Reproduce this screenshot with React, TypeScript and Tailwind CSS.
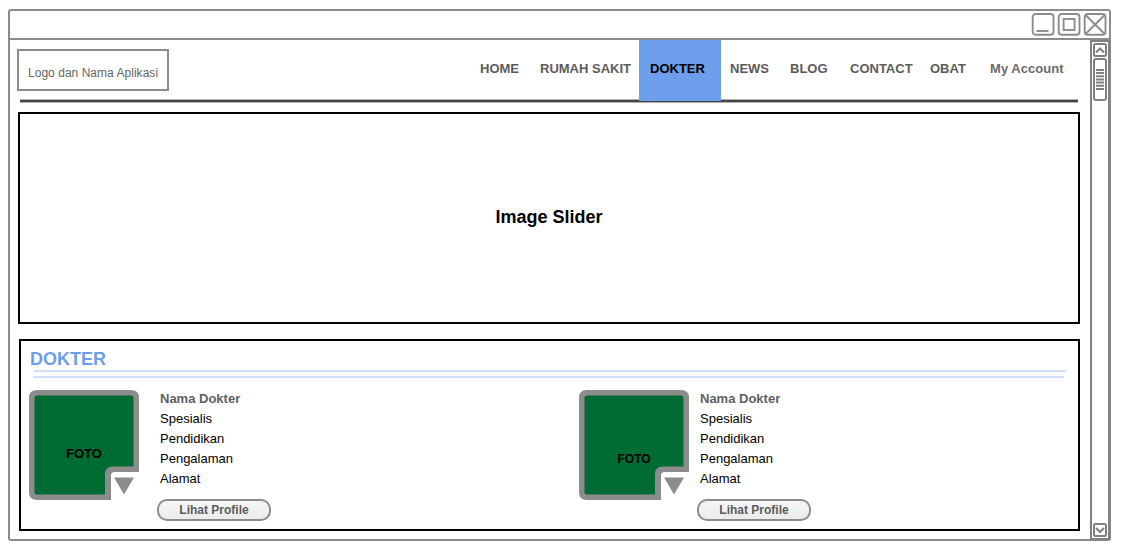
const navItems = [
  { label: "HOME", box: "w-[60px]" },
  { label: "RUMAH SAKIT", box: "w-[99px]" },
  { label: "DOKTER", box: "w-[82px] pl-[11px] bg-[#6d9eeb] text-black" },
  { label: "NEWS", box: "w-[69px] pl-[9px]" },
  { label: "BLOG", box: "w-[60px]" },
  { label: "CONTACT", box: "w-[80px]" },
  { label: "OBAT", box: "w-[60px]" },
  { label: "My Account", box: "w-[90px] tracking-[0.05px] text-[#6b6b6b]" },
];

function WindowButtons() {
  return (
    <svg width="76" height="24" viewBox="0 0 76 24" fill="none" stroke="#8c8c8c" strokeWidth="1.9" className="shrink-0">
      <rect x="1.7" y="2" width="20.8" height="20.8" rx="3" />
      <path d="M5.5 19H17.5" />
      <rect x="27.7" y="2" width="20.8" height="20.8" rx="3" />
      <rect x="32.6" y="7" width="11" height="11" />
      <rect x="53.7" y="2" width="20.8" height="20.8" rx="3" />
      <path d="M54.5 3L73.7 22M73.7 3L54.5 22" />
    </svg>
  );
}

function ArrowButton({ down = false }: { down?: boolean }) {
  return (
    <svg width="14" height="14" viewBox="0 0 14 14" fill="none" stroke="#808080" strokeWidth="2" className="shrink-0">
      <rect x="1" y="1" width="12" height="12" rx="1.5" />
      <path d={down ? "M3 5L7 9L11 5" : "M3 9.5L7 5.5L11 9.5"} />
    </svg>
  );
}

function ScrollBar() {
  return (
    <div className="flex w-5 shrink-0 flex-col items-center justify-between border-2 border-[#808080] pt-px pb-px">
      <div className="flex flex-col items-center gap-px">
        <ArrowButton />
        <div className="flex h-[43px] w-[14px] flex-col items-center rounded-[3px] border-2 border-[#808080] pt-[9px]">
          <svg width="8" height="22" viewBox="0 0 8 22" stroke="#808080" strokeWidth="2">
            <path d="M0 1H8M0 4.1H8M0 7.3H8M0 10.5H8M0 13.6H8M0 16.8H8M0 20H8" />
          </svg>
        </div>
      </div>
      <ArrowButton down />
    </div>
  );
}

function Photo({ caption }: { caption: string }) {
  return (
    <div className="relative h-[110px] w-[110px] shrink-0">
      <svg width="110" height="110" viewBox="0 0 110 110">
        <path d="M8 0H102Q110 0 110 8V82H85.5Q82 82 82 85.5V110H8Q0 110 0 102V8Q0 0 8 0Z" fill="#8c8c8c" />
        <path d="M8 5.5H102Q104.5 5.5 104.5 8V76.5H84Q76 76.5 76 84V104.5H8Q5.5 104.5 5.5 102V8Q5.5 5.5 8 5.5Z" fill="#006b33" />
        <path d="M85 87.5H105L95 104.5Z" fill="#8c8c8c" />
      </svg>
      <span className={caption}>FOTO</span>
    </div>
  );
}

function Doctor({ caption, row }: { caption: string; row: string }) {
  return (
    <div className={row}>
      <Photo caption={caption} />
      <div className="-mt-px flex flex-col text-[13px] leading-5 text-black">
        <p className="pl-[3px] font-bold text-[#5f5f5f]">Nama Dokter</p>
        <p className="pl-[3px]">Spesialis</p>
        <p className="pl-[3px]">Pendidikan</p>
        <p className="pl-[3px]">Pengalaman</p>
        <p className="pl-[3px]">Alamat</p>
        <button className="mt-[10px] h-[22px] w-[114px] rounded-[10px] border-2 border-[#8c8c8c] bg-linear-to-b from-[#f6f6f6] to-[#ebebeb] text-xs leading-[18px] font-bold text-[#5b5b5b]">
          Lihat Profile
        </button>
      </div>
    </div>
  );
}

export default function App() {
  return (
    <div className="h-[560px] w-[1130px] bg-white pt-[9px] pl-2 font-['Liberation_Sans',Arial,sans-serif]">
      <div className="flex h-[532px] w-[1103px] flex-col rounded-[3px] border-2 border-[#8c8c8c]">
        <div className="flex h-[29px] shrink-0 justify-end border-b-2 border-[#8c8c8c] pt-px pr-[2px]">
          <WindowButtons />
        </div>
        <div className="-mr-px -mb-px flex min-h-0 flex-1 justify-between">
          <main className="w-[1070px]">
            <header className="flex h-[61px] justify-between pl-[7px]">
              <div className="mt-[9px] h-[42px] w-[152px] border-2 border-[#8c8c8c] pt-[14px] pl-[9px] text-xs leading-4 tracking-[0.03px] whitespace-nowrap text-[#666666]">
                Logo dan Nama Aplikasi
              </div>
              <nav className="relative z-10 flex text-[13px] leading-[15px] font-bold text-[#5b5b5b]">
                {navItems.map((item) => (
                  <a key={item.label} className={`${item.box} block h-[61px] pt-[21px] whitespace-nowrap`}>
                    {item.label}
                  </a>
                ))}
              </nav>
            </header>
            <div className="-mt-[2px] ml-[10px] h-1 w-[1058px] rounded-[1px] border-y border-[#b4b4b4] bg-[#434343]" />
            <section className="mt-[9px] ml-2 flex h-[212px] w-[1062px] items-center justify-center border-2 border-black pb-[2px] text-lg leading-5 font-bold text-black">
              Image Slider
            </section>
            <section className="mt-[15px] ml-[9px] h-[192px] w-[1061px] border-2 border-black">
              <h2 className="pt-[7px] pl-[9px] text-lg leading-[22px] font-bold text-[#6d9eeb]">DOKTER</h2>
              <div className="ml-[13px] h-[2px] w-[1032px] bg-[#cfdff9]" />
              <div className="mt-1 ml-3 h-[2px] w-[1031px] bg-[#cfdff9]" />
              <div className="flex pt-3 pl-2">
                <Doctor row="flex w-[550px] gap-[18px]" caption="absolute top-[56px] left-[37px] text-[13px] leading-[15px] font-bold text-black" />
                <Doctor row="flex gap-2" caption="absolute top-[62px] left-[38.5px] text-xs leading-[14px] font-bold text-black" />
              </div>
            </section>
          </main>
          <ScrollBar />
        </div>
      </div>
    </div>
  );
}
